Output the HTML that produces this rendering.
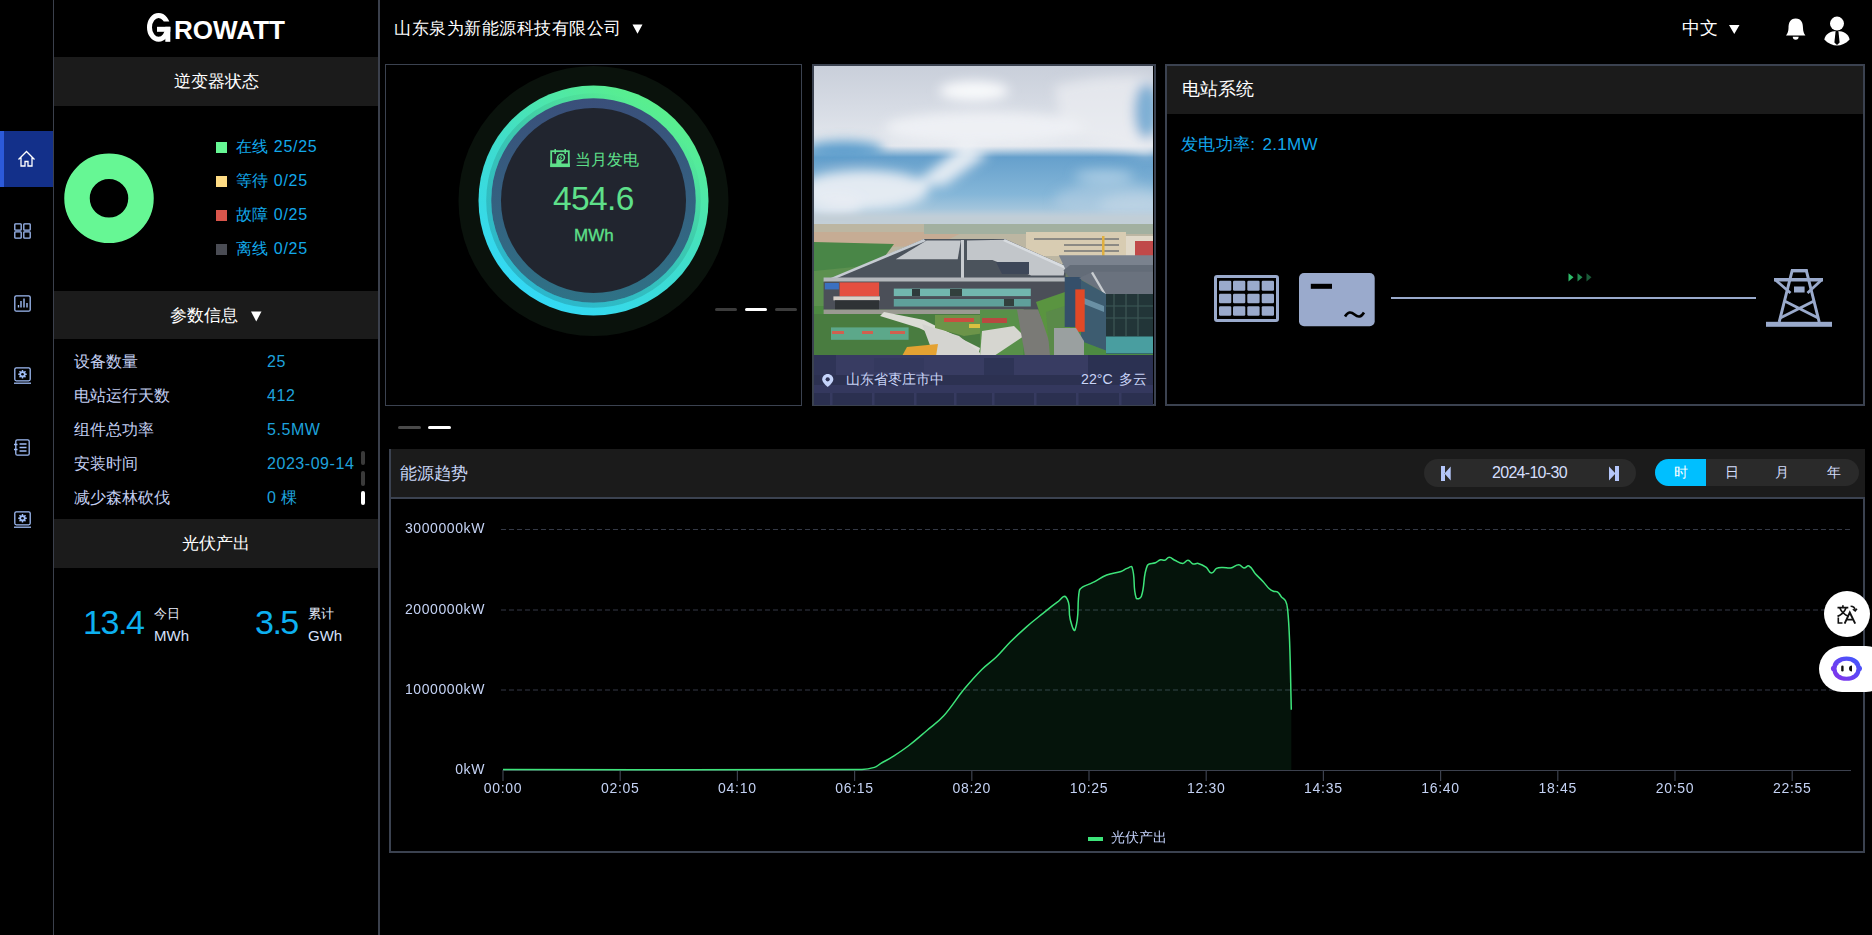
<!DOCTYPE html>
<html><head><meta charset="utf-8">
<style>
*{margin:0;padding:0;box-sizing:border-box}
html,body{width:1872px;height:935px;overflow:hidden;background:#000;font-family:"Liberation Sans",sans-serif;color:#fff}
.a{position:absolute}
.t{position:absolute;white-space:nowrap;line-height:1}
svg{position:absolute;overflow:visible}
.hdr{position:absolute;left:54px;width:324px;background:#1b1b1b}
.lg{position:absolute;left:216px;width:11px;height:11px}
.lt{position:absolute;left:236px;font-size:16px;letter-spacing:0.45px;color:#12a8ea;white-space:nowrap;line-height:1}
.pl{position:absolute;left:73.5px;font-size:15.5px;color:#c3cff2;margin-top:1px;white-space:nowrap;line-height:1}
.pv{position:absolute;left:267px;font-size:16px;letter-spacing:0.55px;color:#1ea2dc;margin-top:1px;white-space:nowrap;line-height:1}
.xl{position:absolute;top:781px;width:60px;text-align:center;font-size:14px;letter-spacing:0.7px;color:#c4d2f4;line-height:1}
.yl{position:absolute;left:390px;width:95px;text-align:right;font-size:14px;letter-spacing:0.6px;color:#c4d2f4;line-height:1}
</style></head><body>

<!-- sidebar -->
<div class="a" style="left:53px;top:0;width:1px;height:935px;background:#3b404c"></div>
<div class="a" style="left:0;top:131px;width:53px;height:56px;background:#13308a"></div>
<div class="a" style="left:0;top:131px;width:4px;height:56px;background:#2c5ada"></div>

<!-- left panel border -->
<div class="a" style="left:378px;top:0;width:2px;height:935px;background:#3b404c"></div>

<!-- headers -->
<div class="hdr" style="top:57px;height:49px"></div>
<div class="t" style="left:54px;width:324px;top:73px;text-align:center;font-size:17px;color:#fff">逆变器状态</div>
<div class="hdr" style="top:291px;height:48px"></div>
<div class="t" style="left:169.5px;top:307px;font-size:17px;color:#fff">参数信息</div>
<div class="hdr" style="top:519px;height:49px"></div>
<div class="t" style="left:54px;width:324px;top:534.5px;text-align:center;font-size:17px;color:#fff">光伏产出</div>

<!-- cards -->
<div class="a" style="left:385px;top:64px;width:417px;height:342px;border:1px solid #3b4250"></div>
<div class="a" style="left:812px;top:64px;width:344px;height:342px;border:2px solid #3b4250;background:#000"></div>
<div class="a" style="left:1165px;top:64px;width:700px;height:342px;border:2px solid #3b4250"></div>
<div class="a" style="left:1167px;top:66px;width:696px;height:48px;background:#1b1b1b"></div>

<!-- chart panel -->
<div class="a" style="left:389px;top:449px;width:1476px;height:404px;border:2px solid #3b4250;border-top:none"></div>
<div class="a" style="left:391px;top:449px;width:1474px;height:48px;background:#1b1b1b"></div>
<div class="a" style="left:389px;top:497px;width:1476px;height:2px;background:#3b4250"></div>


<!-- logo -->
<svg style="left:0;top:0" width="1" height="1">
 <ellipse cx="158.6" cy="27.4" rx="9.1" ry="11.9" fill="none" stroke="#fff" stroke-width="5"/>
 <rect x="163" y="21.5" width="10" height="5.5" fill="#000"/>
 <rect x="157" y="26.8" width="13.3" height="5" fill="#fff"/>
 <rect x="165.3" y="26.8" width="5" height="15" fill="#fff"/>
 <text x="174" y="39" font-family="Liberation Sans" font-weight="bold" font-size="26" fill="#fff" textLength="111" lengthAdjust="spacingAndGlyphs">ROWATT</text>
</svg>

<!-- sidebar icons -->
<svg style="left:0;top:0" width="1" height="1" fill="none" stroke-width="1.3">
 <path d="M18.5 159.5 L26.5 151.5 L34.5 159.5 M21 157.5 V166 H25 V161.5 H28 V166 H32 V157.5" stroke="#fff"/>
 <g stroke="#9fbcf5">
  <rect x="14.8" y="223.8" width="6.4" height="6.4" rx="0.8"/><rect x="23.8" y="223.8" width="6.4" height="6.4" rx="0.8"/>
  <rect x="14.8" y="231.8" width="6.4" height="6.4" rx="0.8"/><rect x="23.8" y="231.8" width="6.4" height="6.4" rx="0.8"/>
  <rect x="14.8" y="295.8" width="15.4" height="15.4" rx="1.5"/>
  <path d="M18.5 307.5 V305 M21 307.5 V301 M24 307.5 V298.5 M27 307.5 V303" stroke-width="1.4"/>
  <rect x="14.8" y="367.8" width="15.4" height="13" rx="1.5"/>
  <path d="M14 383.2 H31"/>
  <rect x="15.8" y="439.8" width="13.4" height="15.4" rx="1.5"/>
  <path d="M19.5 444 H26.5 M19.5 447.5 H26.5 M19.5 451 H26.5 M14 444.5 H17.5 M14 449.5 H17.5" stroke-width="1.3"/>
  <rect x="14.8" y="511.8" width="15.4" height="13" rx="1.5"/>
  <path d="M14 527.2 H31"/>
 </g>
 <g fill="#9fbcf5" stroke="none"><path d="M26.74 373.57 L26.74 375.03 L25.62 375.01 L25.21 376.01 L26.01 376.78 L24.98 377.81 L24.21 377.01 L23.21 377.42 L23.23 378.54 L21.77 378.54 L21.79 377.42 L20.79 377.01 L20.02 377.81 L18.99 376.78 L19.79 376.01 L19.38 375.01 L18.26 375.03 L18.26 373.57 L19.38 373.59 L19.79 372.59 L18.99 371.82 L20.02 370.79 L20.79 371.59 L21.79 371.18 L21.77 370.06 L23.23 370.06 L23.21 371.18 L24.21 371.59 L24.98 370.79 L26.01 371.82 L25.21 372.59 L25.62 373.59 Z"/><path d="M26.74 517.57 L26.74 519.03 L25.62 519.01 L25.21 520.01 L26.01 520.78 L24.98 521.81 L24.21 521.01 L23.21 521.42 L23.23 522.54 L21.77 522.54 L21.79 521.42 L20.79 521.01 L20.02 521.81 L18.99 520.78 L19.79 520.01 L19.38 519.01 L18.26 519.03 L18.26 517.57 L19.38 517.59 L19.79 516.59 L18.99 515.82 L20.02 514.79 L20.79 515.59 L21.79 515.18 L21.77 514.06 L23.23 514.06 L23.21 515.18 L24.21 515.59 L24.98 514.79 L26.01 515.82 L25.21 516.59 L25.62 517.59 Z"/></g>
 <g fill="#000" stroke="none"><circle cx="22.5" cy="374.3" r="1.3"/><circle cx="22.5" cy="518.3" r="1.3"/></g>
</svg>

<!-- inverter status -->
<svg style="left:0;top:0" width="1" height="1">
 <circle cx="109" cy="198.3" r="32" fill="none" stroke="#66f794" stroke-width="25.5"/>
</svg>
<div class="lg" style="top:142px;background:#66f794"></div>
<div class="lg" style="top:176px;background:#ffdc84"></div>
<div class="lg" style="top:210px;background:#d9554b"></div>
<div class="lg" style="top:244px;background:#4a4c54"></div>
<div class="lt" style="top:139px">在线</div><div class="lt" style="top:139px;left:273.8px;letter-spacing:0.7px">25/25</div>
<div class="lt" style="top:173px">等待</div><div class="lt" style="top:173px;left:273.8px;letter-spacing:0.7px">0/25</div>
<div class="lt" style="top:207px">故障</div><div class="lt" style="top:207px;left:273.8px;letter-spacing:0.7px">0/25</div>
<div class="lt" style="top:241px">离线</div><div class="lt" style="top:241px;left:273.8px;letter-spacing:0.7px">0/25</div>

<!-- params -->
<svg style="left:0;top:0" width="1" height="1"><path d="M251 311.5 H261.5 L256.25 321.5 Z" fill="#fff"/></svg>
<div class="pl" style="top:353px">设备数量</div><div class="pv" style="top:353px">25</div>
<div class="pl" style="top:387px">电站运行天数</div><div class="pv" style="top:387px">412</div>
<div class="pl" style="top:421px">组件总功率</div><div class="pv" style="top:421px">5.5MW</div>
<div class="pl" style="top:455px">安装时间</div><div class="pv" style="top:455px">2023-09-14</div>
<div class="pl" style="top:489px">减少森林砍伐</div><div class="pv" style="top:489px">0</div><div class="pv" style="top:489px;left:280.5px">棵</div>
<div class="a" style="left:361px;top:451px;width:4px;height:14px;border-radius:2px;background:#3a3a3a"></div>
<div class="a" style="left:361px;top:471px;width:4px;height:15px;border-radius:2px;background:#3a3a3a"></div>
<div class="a" style="left:361px;top:491px;width:4px;height:14px;border-radius:2px;background:#fff"></div>

<!-- pv output -->
<div class="t" style="left:83px;top:605px;font-size:34px;letter-spacing:-1.4px;color:#0db0f0">13.4</div>
<div class="t" style="left:154px;top:607px;font-size:13px;color:#e8eefc">今日</div>
<div class="t" style="left:154px;top:627.5px;font-size:15px;color:#d6e0fc">MWh</div>
<div class="t" style="left:255px;top:605px;font-size:34px;letter-spacing:-1.5px;color:#0db0f0">3.5</div>
<div class="t" style="left:308px;top:607px;font-size:13px;color:#e8eefc">累计</div>
<div class="t" style="left:308px;top:627.5px;font-size:15px;color:#d6e0fc">GWh</div>


<!-- top header -->
<div class="t" style="left:394px;top:20px;font-size:17px;letter-spacing:0.5px;color:#fff">山东泉为新能源科技有限公司</div>
<svg style="left:0;top:0" width="1" height="1"><path d="M632.5 24.5 H642.5 L637.5 33.8 Z M1729 25 H1739.5 L1734.25 34 Z" fill="#fff"/></svg>
<div class="t" style="left:1682px;top:19px;font-size:18px;color:#fff">中文</div>
<svg style="left:0;top:0" width="1" height="1">
 <path d="M1795.7 18.5 C1790 18.5 1788.5 23 1788.5 28 C1788.5 31.5 1787.5 33.5 1786 35.5 H1805.4 C1804 33.5 1803 31.5 1803 28 C1803 23 1801.5 18.5 1795.7 18.5 Z" fill="#fff"/>
 <path d="M1792.8 36.8 A2.9 2.9 0 0 0 1798.6 36.8 Z" fill="#fff"/>
 <circle cx="1837" cy="23.6" r="7" fill="#fff"/>
 <path d="M1824.3 39.5 C1825.5 34 1830 31 1837 31 C1844 31 1848.5 34 1849.6 39.5 C1846 43.5 1841 45.5 1837 45.5 C1833 45.5 1828 43.5 1824.3 39.5 Z" fill="#fff"/>
 <path d="M1835.6 31 L1838.4 31 L1839.6 42.5 L1837 45 L1834.4 42.5 Z" fill="#000"/>
</svg>

<!-- gauge card -->
<svg style="left:0;top:0" width="1" height="1">
 <defs>
  <linearGradient id="rg" x1="0.2" y1="0.95" x2="0.8" y2="0.05">
   <stop offset="0" stop-color="#32d8f8"/><stop offset="0.45" stop-color="#3ddcd0"/><stop offset="1" stop-color="#5cf088"/>
  </linearGradient>
  <linearGradient id="bg2" x1="0" y1="0" x2="0" y2="1">
   <stop offset="0" stop-color="#3a4f7a"/><stop offset="1" stop-color="#2f7286"/>
  </linearGradient>
 </defs>
 <circle cx="593.5" cy="201" r="135" fill="#0a120c"/>
 <circle cx="593.5" cy="200.5" r="115" fill="url(#rg)"/>
 <linearGradient id="dk" x1="0.2" y1="0.9" x2="0.8" y2="0.1"><stop offset="0" stop-color="#000" stop-opacity="0.16"/><stop offset="0.6" stop-color="#000" stop-opacity="0.1"/><stop offset="1" stop-color="#000" stop-opacity="0"/></linearGradient>
 <circle cx="593.5" cy="200.5" r="104.8" fill="none" stroke="url(#dk)" stroke-width="5"/>
 <circle cx="593.5" cy="200.5" r="102.3" fill="url(#bg2)"/>
 <circle cx="593.5" cy="200.5" r="92.5" fill="#21252f"/>
 <g fill="none" stroke="#5ee08a" stroke-width="1.8">
  <rect x="551.2" y="151.2" width="17.6" height="15"/>
  <path d="M555.2 149 V154 M565.2 149 V154" stroke-width="1.5"/>
  <circle cx="561" cy="157.6" r="3.4" stroke-width="1.6"/>
 </g>
 <rect x="550.3" y="163.5" width="19.5" height="3.5" fill="#5ee08a"/>
 <path d="M556.3 158.5 L560 161 L561.5 161 V164 H556.3 Z" fill="#5ee08a"/>
 <path d="M561.6 155.3 L559.8 158 H562 L560.4 160" fill="none" stroke="#5ee08a" stroke-width="0.9"/>
</svg>
<div class="t" style="left:575px;top:152px;font-size:16px;color:#5ee08a">当月发电</div>
<div class="t" style="left:553px;top:181.5px;font-size:33.5px;color:#5ee08a;letter-spacing:-0.6px">454.6</div>
<div class="t" style="left:574px;top:227px;font-size:17px;color:#5ee08a;-webkit-text-stroke:0.3px #5ee08a">MWh</div>
<div class="a" style="left:715px;top:308px;width:22px;height:3px;border-radius:1.5px;background:#3c3c3c"></div>
<div class="a" style="left:745px;top:308px;width:22px;height:3px;border-radius:1.5px;background:#fff"></div>
<div class="a" style="left:775px;top:308px;width:22px;height:3px;border-radius:1.5px;background:#3c3c3c"></div>
<div class="a" style="left:398px;top:426px;width:23px;height:3px;border-radius:1.5px;background:#4a4a4a"></div>
<div class="a" style="left:428px;top:426px;width:23px;height:3px;border-radius:1.5px;background:#fff"></div>



<!-- photo -->
<svg style="left:814px;top:66px;overflow:hidden" width="339" height="339" viewBox="0 0 339 339">
 <defs>
  <linearGradient id="sky" x1="0" y1="0" x2="0" y2="1">
   <stop offset="0" stop-color="#c9cfda"/><stop offset="0.25" stop-color="#d6dbe4"/><stop offset="0.5" stop-color="#e4e8ee"/><stop offset="0.57" stop-color="#66a0cc"/><stop offset="0.8" stop-color="#84b6d8"/><stop offset="0.95" stop-color="#b6cede"/><stop offset="1" stop-color="#c0d0da"/>
  </linearGradient>
  <filter id="bl6" x="-50%" y="-50%" width="200%" height="200%"><feGaussianBlur stdDeviation="6"/></filter>
  <filter id="bl3" x="-50%" y="-50%" width="200%" height="200%"><feGaussianBlur stdDeviation="3"/></filter>
  <filter id="bl1" x="-5%" y="-5%" width="110%" height="110%"><feGaussianBlur stdDeviation="0.6"/></filter>
 </defs>
 <rect x="0" y="0" width="339" height="160" fill="url(#sky)"/>
 <g filter="url(#bl6)">
  <path d="M240 20 Q300 5 339 12 V90 Q300 80 250 70 Z" fill="#eceef2" opacity="0.7"/>
  <ellipse cx="332" cy="45" rx="12" ry="28" fill="#6aa4d0" opacity="0.85"/>
  <ellipse cx="30" cy="84" rx="40" ry="9" fill="#5b9dcc"/>
  <ellipse cx="50" cy="124" rx="65" ry="20" fill="#eef1f5" opacity="0.9"/>
  <ellipse cx="20" cy="140" rx="30" ry="14" fill="#e8ecf2" opacity="0.8"/>
  <path d="M100 118 L150 78 L175 88 L130 120 Z" fill="#f0f2f6" opacity="0.9"/>
  <ellipse cx="170" cy="62" rx="100" ry="16" fill="#eef0f4"/>
  <ellipse cx="160" cy="25" rx="35" ry="10" fill="#f8f9fb"/>
  <ellipse cx="290" cy="110" rx="30" ry="6" fill="#b8d4e8" opacity="0.8"/>
  <ellipse cx="320" cy="140" rx="35" ry="12" fill="#c6d8e6" opacity="0.9"/>
  <ellipse cx="300" cy="135" rx="60" ry="18" fill="#b4cee2" opacity="0.6"/>
 </g>
 <g filter="url(#bl3)">
  <rect x="-10" y="148" width="360" height="12" fill="#c2ced6"/>
 </g>
 <g filter="url(#bl1)">
  <rect x="0" y="158" width="339" height="132" fill="#6a7a68"/>
  <rect x="0" y="158" width="339" height="40" fill="#bcb6a2"/>
  <path d="M0 166 H150 L120 180 L0 182 Z" fill="#c6ac94"/>
  <rect x="110" y="158" width="229" height="10" fill="#a2b0a0"/>
  <path d="M0 176 L80 178 L60 205 L0 240 Z" fill="#4a8646"/>
  <path d="M0 205 L50 200 L25 245 L0 260 Z" fill="#5b9050"/>
  <rect x="212" y="166" width="100" height="24" fill="#d8ccb2"/>
  <rect x="220" y="172" width="85" height="2" fill="#8c8a84"/><rect x="250" y="178" width="55" height="2" fill="#8c8a84"/><rect x="250" y="184" width="55" height="2" fill="#8c8a84"/>
  <rect x="312" y="170" width="27" height="20" fill="#e0d8c8"/>
  <rect x="321" y="175" width="18" height="16" fill="#c04a48"/>
  <rect x="288" y="170" width="2.5" height="22" fill="#e0b040"/>
  <path d="M0 240 H339 V290 H0 Z" fill="#4e8a42"/>
  <path d="M110 173 H191 L251.5 200 V215.7 H9.6 Z" fill="#4c525c"/>
  <path d="M109.6 173 L9.6 214.9 L16 214.9 L112 175 Z" fill="#c6ccd2"/>
  <path d="M112.7 174.6 H146.8 L143.7 193.2 H81.7 Z" fill="#c4c8cc"/>
  
  <path d="M153 174.6 L190.8 173.8 L251.3 200 L249.7 209.5 L217.2 209.5 L178.4 194 L153 194 Z" fill="#c2c6ca"/><path d="M182 196 H215 V208 H188 Z" fill="#3e4658"/>
  <rect x="147" y="174" width="3" height="38" fill="#c8ccd0"/>
  <path d="M190.8 173 L251.3 200 L251.3 203 L189 175 Z" fill="#d8dce0"/>
  <rect x="9.6" y="211.5" width="242" height="4.2" fill="#b4b8bc"/>
  <rect x="9.6" y="215.7" width="242" height="28" fill="#4c5058"/>
  <rect x="10.9" y="217" width="14" height="6.4" fill="#3a70c0"/>
  <rect x="25.6" y="216.4" width="39.5" height="14" fill="#e45040"/>
  <rect x="19.4" y="230.4" width="46.5" height="3.9" fill="#d8d0c8"/>
  <rect x="21" y="234.3" width="44" height="9.3" fill="#2e3034"/>
  <rect x="79.8" y="222.6" width="137" height="7.5" fill="#72b6ae"/>
  <rect x="79.8" y="233" width="137" height="7.5" fill="#5ea09a"/>
  <rect x="98" y="223" width="8" height="7" fill="#2e3a3c"/><rect x="136" y="223" width="12" height="7" fill="#30403e"/><rect x="190" y="233" width="10" height="7" fill="#30403e"/>
  <rect x="9.6" y="243.6" width="200" height="4.5" fill="#9a9a92"/>
  <rect x="0" y="248" width="209" height="42" fill="#4a7c40"/>
  <rect x="17" y="261.4" width="77.6" height="12.4" fill="#5ca88a"/>
  <rect x="18" y="265" width="12" height="3" fill="#d06050"/><rect x="48" y="265" width="11" height="3" fill="#d06050"/><rect x="76" y="265" width="15" height="3" fill="#d06050"/>
  <path d="M70 246 L110 254 L166 282 L164 290 L105 262 L66 250 Z" fill="#dcdcd6"/>
  <path d="M108 258 L145 270 L170 290 H120 Z" fill="#d4d4d0"/>
  <path d="M93 281 L124 278 L122 290 H88 Z" fill="#e4a230"/>
  <path d="M121 249 H178 V266 L150 270 L121 262 Z" fill="#6c9448"/>
  <rect x="130" y="252" width="30" height="4" fill="#c85040"/><rect x="155" y="258" width="18" height="4" fill="#d8c040"/>
  <path d="M166 243.6 H209 V290 H166 Z" fill="#589048"/>
  <rect x="168" y="252" width="25" height="5" fill="#b84a40"/>
  <path d="M168 265 L200 260 L210 270 L180 290 H166 Z" fill="#d6d6d0"/>
  <path d="M203 243.6 H224 L243 290 H211 Z" fill="#7a7a76"/>
  <path d="M222 236 L251 226 L259 280 L240 290 Z" fill="#5a9440"/>
  <path d="M232 246 L251 240 V270 L244 290 H236 Z" fill="#5a8a48"/>
  <path d="M244.8 189.3 H339 V200 L252 204.6 Z" fill="#7a828e"/>
  <path d="M249.5 204.6 L256 199 H339 V211 H255 Z" fill="#646c78"/>
  <rect x="250.7" y="211" width="16.5" height="50" fill="#34506a"/>
  <path d="M265 212 L279 205.8 H339 V228 H292 Z" fill="#6a727e"/>
  <path d="M279 205.8 L292 228 L290 229 L277 207 Z" fill="#c8ccd0"/>
  <path d="M267 214 L292 228 V284.6 L267 275 Z" fill="#3c5c70"/>
  <path d="M270 232 L290 240 V246 L270 238 Z" fill="#6a90a4"/>
  <rect x="292" y="228" width="47" height="60" fill="#203638"/>
  <path d="M292 240 H339 M292 252 H339 M300 228 V270 M312 228 V270 M324 228 V270" stroke="#3e5656" stroke-width="1.2"/>
  <rect x="292" y="270.5" width="47" height="17" fill="#4a9ea0"/>
  <rect x="261.3" y="223.4" width="9.4" height="42.4" fill="#e24a28"/>
  <path d="M240 262 H262 L270 275 V290 H240 Z" fill="#9aa0a0"/>
 </g>
 <rect x="0" y="289" width="339" height="50" fill="#2f3457"/>
 <rect x="22" y="289" width="252" height="20" fill="#383c62"/>
 <rect x="60" y="292" width="50" height="14" fill="#34395e"/>
 <rect x="170" y="292" width="30" height="17" fill="#2e3456"/>
 <rect x="274" y="289" width="65" height="20" fill="#2b3152"/>
 <rect x="0" y="309" width="339" height="10" fill="#2c3151"/>
 <rect x="0" y="319" width="339" height="8" fill="#34385e"/>
 <rect x="0" y="327" width="339" height="12" fill="#2b3050"/>
 <rect x="16" y="327" width="2.5" height="12" fill="#363a60"/><rect x="58" y="327" width="2.5" height="12" fill="#363a60"/><rect x="100" y="327" width="2.5" height="12" fill="#363a60"/><rect x="140" y="327" width="2.5" height="12" fill="#363a60"/><rect x="178" y="327" width="2.5" height="12" fill="#363a60"/><rect x="220" y="327" width="2.5" height="12" fill="#363a60"/><rect x="262" y="327" width="2.5" height="12" fill="#363a60"/><rect x="305" y="327" width="2.5" height="12" fill="#363a60"/>
</svg>
<svg style="left:0;top:0" width="1" height="1">
 <path d="M827.7 374 C824.6 374 822.2 376.4 822.2 379.5 C822.2 382.8 827.7 387 827.7 387 C827.7 387 833.3 382.8 833.3 379.5 C833.3 376.4 830.8 374 827.7 374 Z" fill="#c5d4fa"/>
 <circle cx="827.7" cy="379.3" r="2.1" fill="#2f3457"/>
</svg>
<div class="t" style="left:846px;top:372px;font-size:14.2px;color:#c9d4f8">山东省枣庄市中</div>
<div class="t" style="left:1081px;top:372px;font-size:14.2px;color:#c9d4f8">22°C</div><div class="t" style="left:1119px;top:372px;font-size:14.2px;color:#c9d4f8">多云</div>

<!-- station system -->
<div class="t" style="left:1182px;top:81px;font-size:17.5px;color:#fff">电站系统</div>
<div class="t" style="left:1181px;top:135.5px;font-size:17px;letter-spacing:0.3px;color:#12a6ec">发电功率:</div><div class="t" style="left:1262.5px;top:135.5px;font-size:17px;letter-spacing:0.3px;color:#12a6ec">2.1MW</div>
<svg style="left:0;top:0" width="1" height="1">
 <rect x="1215.5" y="276.5" width="62" height="44" rx="1.5" fill="none" stroke="#9aaacc" stroke-width="3"/>
 <g fill="#9aaacc">
  <rect x="1219" y="280.7" width="12.3" height="10" rx="1.2"/><rect x="1233" y="280.7" width="12.3" height="10" rx="1.2"/><rect x="1247.3" y="280.7" width="12.3" height="10" rx="1.2"/><rect x="1261.7" y="280.7" width="12.3" height="10" rx="1.2"/>
  <rect x="1219" y="293.7" width="12.3" height="9.6" rx="1.2"/><rect x="1233" y="293.7" width="12.3" height="9.6" rx="1.2"/><rect x="1247.3" y="293.7" width="12.3" height="9.6" rx="1.2"/><rect x="1261.7" y="293.7" width="12.3" height="9.6" rx="1.2"/>
  <rect x="1219" y="306.2" width="12.3" height="9.6" rx="1.2"/><rect x="1233" y="306.2" width="12.3" height="9.6" rx="1.2"/><rect x="1247.3" y="306.2" width="12.3" height="9.6" rx="1.2"/><rect x="1261.7" y="306.2" width="12.3" height="9.6" rx="1.2"/>
  <rect x="1299" y="273" width="75.7" height="53.2" rx="5"/>
  <rect x="1391" y="297" width="365" height="2"/>
  <rect x="1766" y="321.8" width="66" height="5"/>
 </g>
 <rect x="1310.8" y="283.8" width="21.2" height="5" fill="#000"/>
 <path d="M1345 316.5 C1348 311.5 1351 311.5 1354.5 314.5 C1358 317.5 1361 317.5 1364 312.5" fill="none" stroke="#000" stroke-width="2.6"/>
 <g fill="none" stroke="#9aaacc" stroke-width="3">
  <path d="M1792.3 270 L1779.2 322 M1806.2 270 L1819.2 322"/>
  <path d="M1791 270.7 H1807.7" stroke-width="3.4"/>
  <path d="M1774 279.7 H1823" stroke-width="3.6"/>
  <path d="M1775.5 280 L1790.5 293 M1821.5 280 L1807.5 293" stroke-width="2.8"/>
  <path d="M1784.5 301 L1818.2 318 M1814 301 L1780.2 318" stroke-width="2.8"/>
 </g>
 <rect x="1794" y="286.5" width="10.6" height="6" fill="#9aaacc"/>
 <path d="M1568.5 273.2 L1573.5 277.3 L1568.5 281.5 Z" fill="#2ebd6a"/>
 <path d="M1577.5 273.2 L1582.5 277.3 L1577.5 281.5 Z" fill="#228a50"/>
 <path d="M1586.5 273.2 L1591.5 277.3 L1586.5 281.5 Z" fill="#1a5a38"/>
</svg>

<!-- chart -->
<div class="t" style="left:400px;top:465px;font-size:17px;color:#c8d6f6">能源趋势</div>
<div class="a" style="left:1424px;top:459px;width:212px;height:28px;border-radius:14px;background:#2a2a2a"></div>
<div class="t" style="left:1492px;top:465px;font-size:16px;letter-spacing:-0.7px;color:#d4defc">2024-10-30</div>
<div class="a" style="left:1655px;top:459px;width:204px;height:27px;border-radius:13.5px;background:#2a2a2a;overflow:hidden"><div class="a" style="left:0;top:0;width:51px;height:27px;background:#00bfff"></div></div>
<div class="t" style="left:1661px;top:465px;width:40px;text-align:center;font-size:14px;color:#fff">时</div>
<div class="t" style="left:1712px;top:465px;width:40px;text-align:center;font-size:14px;color:#d4defc">日</div>
<div class="t" style="left:1762px;top:465px;width:40px;text-align:center;font-size:14px;color:#d4defc">月</div>
<div class="t" style="left:1814px;top:465px;width:40px;text-align:center;font-size:14px;color:#d4defc">年</div>
<svg style="left:0;top:0" width="1" height="1">
<path d="M1441 466 H1445 V481 H1441 Z M1450.7 466.5 L1444.5 473.5 L1450.7 480.5 Z" fill="#b4c6fa"/>
<path d="M1615 466 H1619 V481 H1615 Z M1609 466.5 L1615.5 473.5 L1609 480.5 Z" fill="#b4c6fa"/>
<path d="M501 529.5 H1851" stroke="#343946" stroke-width="1.2" stroke-dasharray="5 3"/>
<path d="M501 610.0 H1851" stroke="#343946" stroke-width="1.2" stroke-dasharray="5 3"/>
<path d="M501 690.0 H1851" stroke="#343946" stroke-width="1.2" stroke-dasharray="5 3"/>
<path d="M503.0 769.5 C646.6 769.5 718.4 770.3 862.0 769.5 C867.0 769.5 869.6 768.9 874.4 767.4 C877.1 766.5 878.0 765.2 880.5 763.7 C885.4 760.8 887.9 759.6 892.7 756.6 C899.3 752.4 902.7 750.3 908.9 745.5 C916.5 739.7 919.9 736.4 927.2 730.2 C933.8 724.6 937.7 722.4 943.5 716.0 C952.4 706.1 955.3 699.9 963.8 689.6 C970.8 681.2 974.4 677.0 982.1 669.3 C987.4 664.0 990.9 662.2 996.3 657.0 C1002.3 651.2 1004.6 647.7 1010.5 641.8 C1016.8 635.5 1020.1 632.5 1026.8 626.6 C1033.1 621.1 1036.5 618.6 1043.0 613.4 C1048.7 608.9 1051.3 606.4 1057.3 602.2 C1060.6 599.9 1063.7 594.1 1066.1 597.3 C1071.5 604.4 1067.8 610.7 1070.2 619.3 C1071.4 623.6 1073.8 633.7 1075.2 629.4 C1079.9 614.6 1076.7 606.1 1079.3 590.8 C1079.6 588.9 1080.8 588.1 1082.4 587.1 C1086.2 584.8 1088.6 584.7 1092.5 582.7 C1098.3 579.8 1100.7 577.4 1106.7 575.0 C1112.2 572.8 1115.4 573.3 1121.0 571.5 C1123.6 570.7 1124.5 569.3 1127.0 568.4 C1129.0 567.7 1131.5 565.4 1132.1 567.4 C1135.8 579.2 1132.5 586.2 1136.2 597.9 C1136.8 599.9 1140.6 598.5 1141.3 596.5 C1145.4 584.5 1142.5 577.1 1147.4 565.4 C1148.7 562.3 1152.4 564.1 1155.5 562.8 C1157.7 561.9 1158.3 560.3 1160.6 559.7 C1162.2 559.3 1163.1 560.7 1164.7 560.3 C1166.8 559.7 1167.1 557.3 1169.3 557.3 C1171.8 557.3 1172.5 559.3 1174.8 560.3 C1178.0 561.7 1179.4 563.4 1182.9 563.4 C1185.3 563.4 1185.6 560.2 1188.0 560.3 C1190.5 560.4 1190.7 563.3 1193.1 564.0 C1195.1 564.6 1196.2 562.9 1198.2 563.4 C1201.7 564.3 1203.4 565.3 1206.3 567.4 C1208.7 569.2 1208.4 572.6 1211.4 572.9 C1214.1 573.2 1214.1 569.6 1216.5 568.4 C1218.7 567.3 1220.1 567.5 1222.6 567.4 C1225.8 567.3 1227.5 568.5 1230.7 568.0 C1234.1 567.4 1235.3 564.8 1238.8 564.8 C1241.2 564.8 1241.5 567.7 1243.9 568.0 C1246.1 568.3 1247.0 565.0 1249.0 566.0 C1252.5 567.7 1252.5 570.6 1255.1 573.5 C1258.2 576.9 1260.1 578.3 1263.2 581.7 C1265.7 584.4 1266.6 586.2 1269.3 588.8 C1270.7 590.1 1271.6 590.5 1273.4 591.2 C1274.9 591.8 1276.1 590.9 1277.4 591.8 C1279.5 593.3 1279.8 594.9 1281.5 596.9 C1283.0 598.6 1284.6 598.9 1285.6 601.0 C1287.1 604.0 1287.3 605.8 1287.6 609.1 C1288.9 622.1 1289.1 628.6 1289.6 641.6 C1290.6 668.8 1290.6 682.5 1291.3 709.7 L1291.3 770 L503 770 Z" fill="#3de47a" fill-opacity="0.085"/>
<path d="M503 770.5 H1851" stroke="#3c414e" stroke-width="1.2"/>
<path d="M503.0 770 V781" stroke="#3c414e" stroke-width="1.2"/>
<path d="M620.2 770 V781" stroke="#3c414e" stroke-width="1.2"/>
<path d="M737.4 770 V781" stroke="#3c414e" stroke-width="1.2"/>
<path d="M854.6 770 V781" stroke="#3c414e" stroke-width="1.2"/>
<path d="M971.8 770 V781" stroke="#3c414e" stroke-width="1.2"/>
<path d="M1089.0 770 V781" stroke="#3c414e" stroke-width="1.2"/>
<path d="M1206.2 770 V781" stroke="#3c414e" stroke-width="1.2"/>
<path d="M1323.4 770 V781" stroke="#3c414e" stroke-width="1.2"/>
<path d="M1440.6 770 V781" stroke="#3c414e" stroke-width="1.2"/>
<path d="M1557.8 770 V781" stroke="#3c414e" stroke-width="1.2"/>
<path d="M1675.0 770 V781" stroke="#3c414e" stroke-width="1.2"/>
<path d="M1792.2 770 V781" stroke="#3c414e" stroke-width="1.2"/>
<path d="M503.0 769.5 C646.6 769.5 718.4 770.3 862.0 769.5 C867.0 769.5 869.6 768.9 874.4 767.4 C877.1 766.5 878.0 765.2 880.5 763.7 C885.4 760.8 887.9 759.6 892.7 756.6 C899.3 752.4 902.7 750.3 908.9 745.5 C916.5 739.7 919.9 736.4 927.2 730.2 C933.8 724.6 937.7 722.4 943.5 716.0 C952.4 706.1 955.3 699.9 963.8 689.6 C970.8 681.2 974.4 677.0 982.1 669.3 C987.4 664.0 990.9 662.2 996.3 657.0 C1002.3 651.2 1004.6 647.7 1010.5 641.8 C1016.8 635.5 1020.1 632.5 1026.8 626.6 C1033.1 621.1 1036.5 618.6 1043.0 613.4 C1048.7 608.9 1051.3 606.4 1057.3 602.2 C1060.6 599.9 1063.7 594.1 1066.1 597.3 C1071.5 604.4 1067.8 610.7 1070.2 619.3 C1071.4 623.6 1073.8 633.7 1075.2 629.4 C1079.9 614.6 1076.7 606.1 1079.3 590.8 C1079.6 588.9 1080.8 588.1 1082.4 587.1 C1086.2 584.8 1088.6 584.7 1092.5 582.7 C1098.3 579.8 1100.7 577.4 1106.7 575.0 C1112.2 572.8 1115.4 573.3 1121.0 571.5 C1123.6 570.7 1124.5 569.3 1127.0 568.4 C1129.0 567.7 1131.5 565.4 1132.1 567.4 C1135.8 579.2 1132.5 586.2 1136.2 597.9 C1136.8 599.9 1140.6 598.5 1141.3 596.5 C1145.4 584.5 1142.5 577.1 1147.4 565.4 C1148.7 562.3 1152.4 564.1 1155.5 562.8 C1157.7 561.9 1158.3 560.3 1160.6 559.7 C1162.2 559.3 1163.1 560.7 1164.7 560.3 C1166.8 559.7 1167.1 557.3 1169.3 557.3 C1171.8 557.3 1172.5 559.3 1174.8 560.3 C1178.0 561.7 1179.4 563.4 1182.9 563.4 C1185.3 563.4 1185.6 560.2 1188.0 560.3 C1190.5 560.4 1190.7 563.3 1193.1 564.0 C1195.1 564.6 1196.2 562.9 1198.2 563.4 C1201.7 564.3 1203.4 565.3 1206.3 567.4 C1208.7 569.2 1208.4 572.6 1211.4 572.9 C1214.1 573.2 1214.1 569.6 1216.5 568.4 C1218.7 567.3 1220.1 567.5 1222.6 567.4 C1225.8 567.3 1227.5 568.5 1230.7 568.0 C1234.1 567.4 1235.3 564.8 1238.8 564.8 C1241.2 564.8 1241.5 567.7 1243.9 568.0 C1246.1 568.3 1247.0 565.0 1249.0 566.0 C1252.5 567.7 1252.5 570.6 1255.1 573.5 C1258.2 576.9 1260.1 578.3 1263.2 581.7 C1265.7 584.4 1266.6 586.2 1269.3 588.8 C1270.7 590.1 1271.6 590.5 1273.4 591.2 C1274.9 591.8 1276.1 590.9 1277.4 591.8 C1279.5 593.3 1279.8 594.9 1281.5 596.9 C1283.0 598.6 1284.6 598.9 1285.6 601.0 C1287.1 604.0 1287.3 605.8 1287.6 609.1 C1288.9 622.1 1289.1 628.6 1289.6 641.6 C1290.6 668.8 1290.6 682.5 1291.3 709.7" fill="none" stroke="#3de47a" stroke-width="1.5" stroke-linejoin="round"/>
<rect x="1088" y="837" width="15" height="4" fill="#3de47a"/>
</svg>
<div class="xl" style="left:473.0px">00:00</div>
<div class="xl" style="left:590.2px">02:05</div>
<div class="xl" style="left:707.4px">04:10</div>
<div class="xl" style="left:824.6px">06:15</div>
<div class="xl" style="left:941.8px">08:20</div>
<div class="xl" style="left:1059.0px">10:25</div>
<div class="xl" style="left:1176.2px">12:30</div>
<div class="xl" style="left:1293.4px">14:35</div>
<div class="xl" style="left:1410.6px">16:40</div>
<div class="xl" style="left:1527.8px">18:45</div>
<div class="xl" style="left:1645.0px">20:50</div>
<div class="xl" style="left:1762.2px">22:55</div>
<div class="yl" style="top:521.0px">3000000kW</div>
<div class="yl" style="top:601.5px">2000000kW</div>
<div class="yl" style="top:681.5px">1000000kW</div>
<div class="yl" style="top:761.5px">0kW</div>
<div class="t" style="left:1111px;top:831px;font-size:13.5px;color:#c4d2fc">光伏产出</div>
<!-- /chart -->
<!-- float -->
<div class="a" style="left:1824px;top:591px;width:46px;height:46px;border-radius:50%;background:#fff"></div>
<svg style="left:0;top:0" width="1" height="1">
 <g fill="none" stroke="#111" stroke-width="1.7">
  <path d="M1837.5 607.6 H1848.3 M1842.9 605.2 V607.6 M1839.8 608 C1841.5 612 1844 614.5 1848.4 616.2 M1846 608 C1844.5 612 1842 614.5 1837.5 616.4"/>
  <path d="M1850.6 606.2 C1853 606.2 1855 607.5 1855.2 610.5" stroke-width="1.6"/>
  <path d="M1852.8 609.3 L1855.2 611 L1857 608.8" stroke-width="1.4"/>
  <path d="M1838.3 617.5 V623 H1842.5" stroke-width="1.6"/>
  <path d="M1844.6 623.6 L1849.8 612.5 L1855.2 623.6 M1846.6 619.6 H1853" stroke-width="1.9"/>
 </g>
</svg>
<div class="a" style="left:1819px;top:646px;width:70px;height:46px;border-radius:23px;background:#fff"></div>
<svg style="left:0;top:0" width="1" height="1">
 <defs><linearGradient id="rb" x1="0" y1="1" x2="1" y2="0"><stop offset="0" stop-color="#8a2ee8"/><stop offset="1" stop-color="#3a5cff"/></linearGradient></defs>
 <path d="M1846.5 656.5 C1855 656.5 1860 661 1860.5 666 C1862.5 666.5 1862.6 670.5 1860.5 671 C1859.5 677.5 1854 680.8 1846.5 680.8 C1839 680.8 1833.5 677.5 1832.5 671 C1830.4 670.5 1830.4 666.5 1832.5 666 C1833 661 1838 656.5 1846.5 656.5 Z" fill="url(#rb)"/>
 <ellipse cx="1846.5" cy="668.8" rx="10" ry="8" fill="#fff"/>
 <rect x="1841.2" y="665.5" width="2.4" height="6" rx="1.2" fill="#111"/>
 <path d="M1852 665.5 A3 3 0 0 0 1852 671.5 Z" fill="#111"/>
</svg>

</body></html>
